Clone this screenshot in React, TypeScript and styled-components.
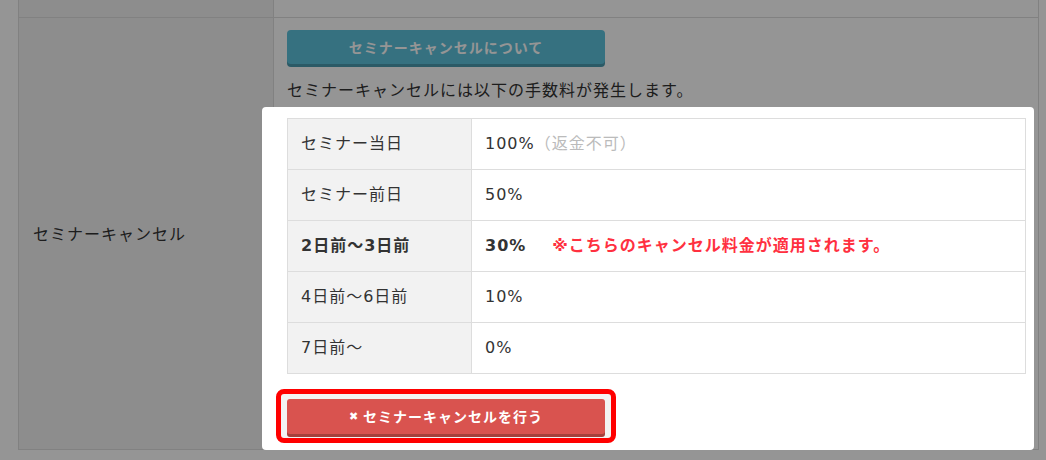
import React from 'react';
import styled, { createGlobalStyle } from 'styled-components';

type Fee = {
  label: string;
  rate: string;
  note?: string;
  applied?: boolean;
};

const fees: Fee[] = [
  { label: 'セミナー当日', rate: '100%', note: '（返金不可）' },
  { label: 'セミナー前日', rate: '50%' },
  { label: '2日前〜3日前', rate: '30%', applied: true },
  { label: '4日前〜6日前', rate: '10%' },
  { label: '7日前〜', rate: '0%' },
];

const GlobalStyle = createGlobalStyle`
  html, body {
    margin: 0;
    padding: 0;
    background: #fff;
  }
  body {
    font-family: "DejaVu Sans", "Noto Sans CJK JP", sans-serif;
    font-size: 16px;
    color: #333;
    letter-spacing: 1px;
  }
`;

const Page = styled.div`
  height: 460px;
  padding-left: 18px;
  box-sizing: border-box;
  overflow: hidden;
`;

const FormTable = styled.table`
  width: 1021px;
  border-collapse: collapse;
  table-layout: fixed;
`;

const FormHead = styled.th`
  width: 255px;
  box-sizing: border-box;
  padding: 0 14px;
  background: #f2f2f2;
  border: 1px solid #ddd;
  border-top: none;
  text-align: left;
  font-weight: normal;
  vertical-align: middle;
`;

const FormCell = styled.td`
  padding: 12px 12px 0 13px;
  background: #fff;
  border: 1px solid #ddd;
  border-top: none;
  vertical-align: top;
`;

const TopRow = styled.tr`
  height: 17px;
`;

const InfoButton = styled.button`
  display: block;
  width: 318px;
  height: 34px;
  padding: 0;
  border: none;
  border-radius: 4px;
  background: #5dc1db;
  box-shadow: 0 3px 0 #4a9aaf;
  color: #fff;
  font-family: inherit;
  font-size: 14px;
  font-weight: bold;
  letter-spacing: 1px;
`;

const Lead = styled.p`
  margin: 15px 0 0;
  line-height: 24px;
`;

const Overlay = styled.div`
  position: fixed;
  inset: 0;
  background: rgba(0, 0, 0, 0.416);
  z-index: 10;
`;

const Spotlight = styled.div`
  position: relative;
  z-index: 20;
  margin: 4px -8px -1px -25px;
  padding: 11px 8px 7px 25px;
  background: #fff;
  border-radius: 4px;
`;

const FeeTable = styled.table`
  width: 100%;
  border-collapse: collapse;
  table-layout: fixed;
`;

const FeeLabel = styled.th<{ $applied?: boolean }>`
  width: 184px;
  box-sizing: border-box;
  padding: 12px 13px;
  line-height: 26px;
  background: #f2f2f2;
  border: 1px solid #ddd;
  text-align: left;
  font-weight: ${({ $applied }) => ($applied ? 'bold' : 'normal')};
`;

const FeeValue = styled.td<{ $applied?: boolean }>`
  padding: 12px 13px;
  line-height: 26px;
  border: 1px solid #ddd;
  font-weight: ${({ $applied }) => ($applied ? 'bold' : 'normal')};
`;

const Note = styled.span`
  color: #bbb;
`;

const AppliedNote = styled.span`
  margin-left: 26px;
  color: #ff3040;
  font-weight: bold;
`;

const CancelFrame = styled.div`
  width: fit-content;
  margin: 15px 0 0 -11px;
  padding: 5px 6px 4px;
  border: 5px solid #f00;
  border-radius: 8px;
  background: #f3f3f3;
`;

const CancelButton = styled.button`
  display: flex;
  align-items: center;
  justify-content: center;
  gap: 5px;
  width: 318px;
  height: 35px;
  padding: 0;
  border: none;
  border-radius: 3px;
  background: #d9534f;
  box-shadow: 0 3px 0 #a5403c;
  color: #fff;
  font-family: inherit;
  font-size: 14px;
  font-weight: bold;
  letter-spacing: 1px;
`;

const CrossMark = styled.span`
  font-family: "DejaVu Sans", sans-serif;
  font-size: 11px;
  letter-spacing: 0;
`;

export default function App() {
  return (
    <>
      <GlobalStyle />
      <Overlay />
      <Page>
        <FormTable>
          <tbody>
            <TopRow>
              <FormHead />
              <FormCell />
            </TopRow>
            <tr>
              <FormHead>セミナーキャンセル</FormHead>
              <FormCell>
                <InfoButton>セミナーキャンセルについて</InfoButton>
                <Lead>セミナーキャンセルには以下の手数料が発生します。</Lead>
                <Spotlight>
                  <FeeTable>
                    <tbody>
                      {fees.map((fee) => (
                        <tr key={fee.label}>
                          <FeeLabel $applied={fee.applied}>{fee.label}</FeeLabel>
                          <FeeValue $applied={fee.applied}>
                            {fee.rate}
                            {fee.note && <Note>{fee.note}</Note>}
                            {fee.applied && (
                              <AppliedNote>※こちらのキャンセル料金が適用されます。</AppliedNote>
                            )}
                          </FeeValue>
                        </tr>
                      ))}
                    </tbody>
                  </FeeTable>
                  <CancelFrame>
                    <CancelButton>
                      <CrossMark>✖</CrossMark>
                      セミナーキャンセルを行う
                    </CancelButton>
                  </CancelFrame>
                </Spotlight>
              </FormCell>
            </tr>
          </tbody>
        </FormTable>
      </Page>
    </>
  );
}
